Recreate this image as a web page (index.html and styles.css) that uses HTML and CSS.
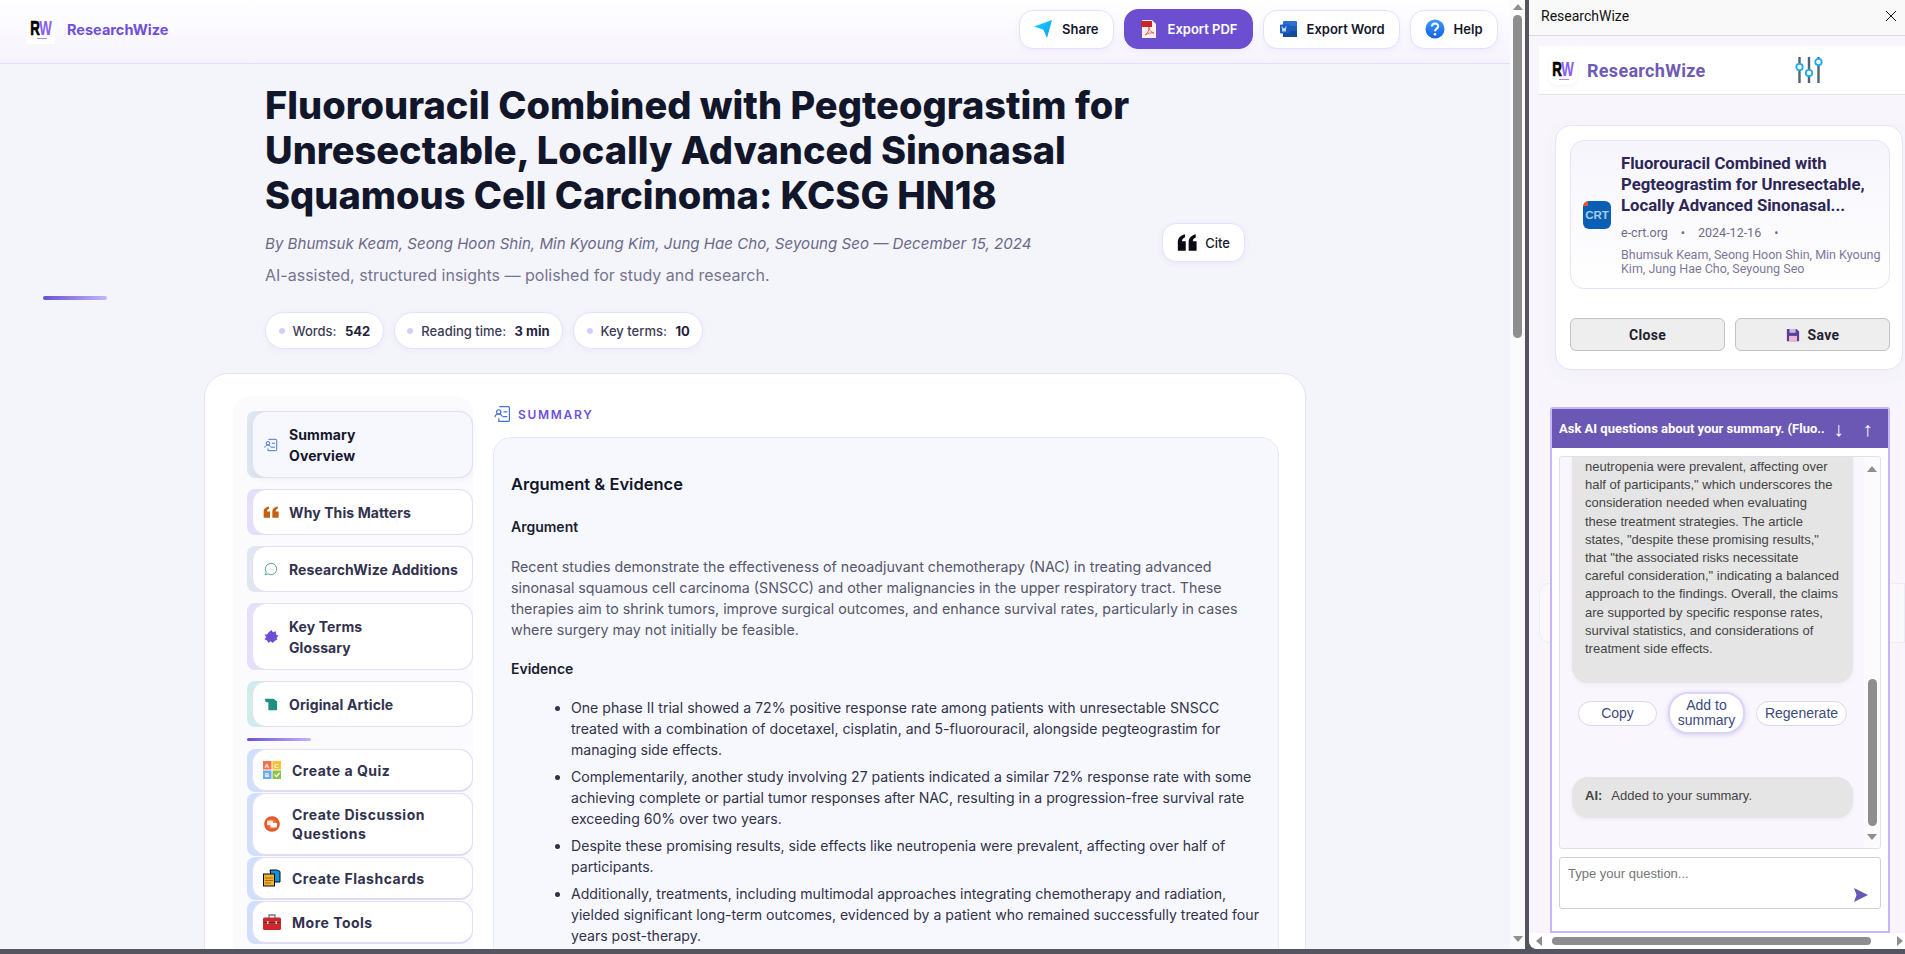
FILE: index.html
```html
<!DOCTYPE html>
<html lang="en">
<head>
    <meta charset="UTF-8">
    <meta name="viewport" content="width=device-width, initial-scale=1.0">
    <title>ResearchWize</title>
    <link rel="stylesheet" href="styles.css">
</head>
<body>
    <div class="window">
        <div class="main-pane">
            <div class="page">
                <header class="topbar">
                    <div class="brand">
                        <div class="logo"><span class="logo-r">R</span><span class="logo-w">W</span></div>
                        <span class="brand-name">ResearchWize</span>
                    </div>
                    <div class="top-actions">
                        <button class="btn">
                            <svg class="btn-icon" viewBox="0 0 20 20"><defs><linearGradient id="plane" x1="0" y1="0" x2="1" y2="1"><stop offset="0" stop-color="#22d3fe"/><stop offset="1" stop-color="#0a9bf5"/></linearGradient></defs><path d="M1 7.5 19 1l-5 18-3.6-8.3z" fill="url(#plane)"/></svg>
                            Share
                        </button>
                        <button class="btn btn-primary">
                            <svg class="btn-icon" viewBox="0 0 20 20"><path d="M3 1h10l4 4v14H3z" fill="#f6f1ee"/><rect x="2" y="2" width="11" height="6" fill="#c8262a"/><path d="M6 16c3-2 4-5 4-8 0 3 2 5 5 6-3-.5-6 0-9 2z" fill="none" stroke="#e8605a" stroke-width="1"/></svg>
                            Export PDF
                        </button>
                        <button class="btn">
                            <svg class="btn-icon" viewBox="0 0 20 20"><rect x="5" y="2" width="14" height="16" rx="1" fill="#2b6fd0"/><rect x="5" y="12" width="14" height="6" fill="#134a9c"/><rect x="5" y="7" width="14" height="5" fill="#1f5ab8"/><rect x="2" y="5.5" width="10" height="9" rx="1" fill="#1d5cc0"/><path d="m4 7.5 1 5 1-3.5 1 3.5 1-5" fill="none" stroke="#fff" stroke-width=".8"/></svg>
                            Export Word
                        </button>
                        <button class="btn">
                            <svg class="btn-icon" viewBox="0 0 20 20"><defs><linearGradient id="helpfill" x1="0" y1="0" x2="0" y2="1"><stop offset="0" stop-color="#3d9bfa"/><stop offset="1" stop-color="#1560e0"/></linearGradient></defs><circle cx="10" cy="10" r="9.5" fill="url(#helpfill)"/><path d="M7 7.6c0-4 6.200-4 6.200-.4 0 2.400-3.200 2.400-3.200 5" fill="none" stroke="#fff" stroke-width="2"/><circle cx="10" cy="15.200" r="1.300" fill="#fff"/></svg>
                            Help
                        </button>
                    </div>
                </header>

                <section class="hero-row">
                    <div class="accent-bar"></div>
                    <div class="hero">
                        <h1>Fluorouracil Combined with Pegteograstim for Unresectable, Locally Advanced Sinonasal Squamous Cell Carcinoma: KCSG HN18</h1>
                        <div class="byline-row">
                            <p class="byline">By Bhumsuk Keam, Seong Hoon Shin, Min Kyoung Kim, Jung Hae Cho, Seyoung Seo — December 15, 2024</p>
                            <button class="btn btn-cite">
                                <svg class="cite-icon" viewBox="0 0 24 20"><path d="M1 20V9.500C1 4.500 4 1.500 9.500 0v4C7 5 6 6.500 6 8.500h4.500V20zM14 20V9.500C14 4.500 17 1.500 22.500 0v4C20 5 19 6.500 19 8.500h4.500V20z" fill="#0a0a12"/></svg>
                                Cite
                            </button>
                        </div>
                        <p class="subtitle">AI-assisted, structured insights — polished for study and research.</p>
                        <div class="chips">
                            <div class="chip"><i class="dot"></i>Words: <b>542</b></div>
                            <div class="chip"><i class="dot"></i>Reading time: <b>3 min</b></div>
                            <div class="chip"><i class="dot"></i>Key terms: <b>10</b></div>
                        </div>
                    </div>
                </section>

                <main class="main-card">
                    <nav class="sidebar">
                        <a class="nav-item two-line active bar-slate"><span class="nav-inner">
                            <svg class="nav-icon small" viewBox="0 0 16 16"><path d="M5 1.500h8.500a1 1 0 0 1 1 1v11a1 1 0 0 1-1 1H4.500V12M9 6h3.500M8 10.500h4.500" fill="none" stroke="#3f6fd8" stroke-width="1.100"/><circle cx="4.500" cy="6" r="2" fill="none" stroke="#3f6fd8" stroke-width="1.100"/><path d="M1 11c0-2 1.500-3 3.500-3s2.500 1 3 2" fill="none" stroke="#3f6fd8" stroke-width="1.100"/></svg>
                            <span>Summary<br>Overview</span>
                        </span></a>
                        <a class="nav-item bar-lilac"><span class="nav-inner">
                            <svg class="nav-icon" viewBox="0 0 24 20"><path d="M1 18V9C1 4.500 3.500 2 9 1v3.500C7 5.500 6 6.500 6 8.500h4.500V18zM14 18V9c0-4.500 2.500-7 8-8v3.500c-2 1-3 2-3 4h4.500V18z" fill="#c2600f"/></svg>
                            <span>Why This Matters</span>
                        </span></a>
                        <a class="nav-item bar-slate"><span class="nav-inner">
                            <svg class="nav-icon small" viewBox="0 0 16 16"><path d="M8 1.500a6.500 6.500 0 1 1-3.400 12L1.500 14.500l1-3A6.500 6.500 0 0 1 8 1.500z" fill="none" stroke="#3aa76d" stroke-width="1"/><path d="M5.500 8h.6M7.700 8h.6M9.900 8h.6" stroke="#9aa" stroke-width="1"/></svg>
                            <span>ResearchWize Additions</span>
                        </span></a>
                        <a class="nav-item two-line bar-lilac"><span class="nav-inner">
                            <svg class="nav-icon" viewBox="0 0 16 16"><path d="M5.500 3.500 8.500 1l1.500 2.500 3-1 .5 3.500 2.500 1-2 2.500 1 1.500-3.500 2L10 15 7.500 13l-2 2-2-3-2.500-1 2-2.500L1 6l3-.5z" fill="#6d4fd6"/></svg>
                            <span>Key Terms<br>Glossary</span>
                        </span></a>
                        <a class="nav-item bar-mint"><span class="nav-inner">
                            <svg class="nav-icon small" viewBox="0 0 16 16"><path d="M1 2h10l4 3v10H5V6H2z" fill="#1f8f82"/></svg>
                            <span>Original Article</span>
                        </span></a>

                        <div class="nav-divider"></div>

                        <a class="nav-item tool bar-blue"><span class="nav-inner">
                            <svg class="tool-icon" viewBox="0 0 18 18"><rect width="8.500" height="8.500" fill="#f2744f"/><rect x="9.500" width="8.500" height="8.500" fill="#fbc02d"/><rect y="9.500" width="8.500" height="8.500" fill="#6aa9f4"/><rect x="9.500" y="9.500" width="8.500" height="8.500" fill="#8bc34a"/><text x="4.200" y="6.500" class="quiz-letter">A</text><text x="13.700" y="6.500" class="quiz-letter">C</text><text x="4.200" y="16" class="quiz-letter">B</text><path d="m11.500 13.500 2 2 3-3.500" fill="none" stroke="#fff" stroke-width="1.200"/></svg>
                            <span>Create a Quiz</span>
                        </span></a>
                        <a class="nav-item tool tool-tall bar-blue"><span class="nav-inner">
                            <svg class="tool-icon" viewBox="0 0 18 18"><defs><radialGradient id="disc"><stop offset="0" stop-color="#f59a6a"/><stop offset="1" stop-color="#dd4a1c"/></radialGradient></defs><circle cx="9" cy="9" r="7.800" fill="url(#disc)"/><rect x="4" y="5.500" width="6" height="4.500" rx="1" fill="#fde3d8"/><rect x="7.500" y="8" width="6.500" height="4.500" rx="1" fill="#fff"/></svg>
                            <span>Create Discussion<br>Questions</span>
                        </span></a>
                        <a class="nav-item tool bar-blue"><span class="nav-inner">
                            <svg class="tool-icon" viewBox="0 0 18 18"><path d="M7 1h7l3 1.500V13h-8z" fill="#1293dc" stroke="#0a0a12" stroke-width="1"/><rect x=".5" y="5" width="11" height="12" fill="#f2b233" stroke="#0a0a12" stroke-width="1"/><path d="M2 9h8M2 11.500h8M2 14h6" stroke="#a06a10" stroke-width="1"/></svg>
                            <span>Create Flashcards</span>
                        </span></a>
                        <a class="nav-item tool bar-blue"><span class="nav-inner">
                            <svg class="tool-icon" viewBox="0 0 18 18"><path d="M6 5V2h6v3" fill="none" stroke="#777" stroke-width="1.300"/><rect y="4.500" width="18" height="12.500" rx="1.500" fill="#c8282e"/><rect y="9" width="18" height="1" fill="#8f1a1f"/><rect x="4" y="8" width="1.500" height="3" fill="#ddd"/><rect x="12.500" y="8" width="1.500" height="3" fill="#ddd"/></svg>
                            <span>More Tools</span>
                        </span></a>
                    </nav>

                    <div class="content">
                        <div class="section-head">
                            <svg class="section-icon" viewBox="0 0 16 16"><path d="M5 1h8.500a1 1 0 0 1 1 1v12a1 1 0 0 1-1 1H4.500v-3M9 6h3.500M8 10.500h4.500" fill="none" stroke="#3f6fd8" stroke-width="1.100"/><circle cx="4.500" cy="6" r="2" fill="none" stroke="#3f6fd8" stroke-width="1.100"/><path d="M1 11c0-2 1.500-3 3.500-3s2.500 1 3 2" fill="none" stroke="#3f6fd8" stroke-width="1.100"/></svg>
                            <span>SUMMARY</span>
                        </div>
                        <article class="summary-box">
                            <h2>Argument &amp; Evidence</h2>
                            <h3>Argument</h3>
                            <p>Recent studies demonstrate the effectiveness of neoadjuvant chemotherapy (NAC) in treating advanced sinonasal squamous cell carcinoma (SNSCC) and other malignancies in the upper respiratory tract. These therapies aim to shrink tumors, improve surgical outcomes, and enhance survival rates, particularly in cases where surgery may not initially be feasible.</p>
                            <h3 class="evidence">Evidence</h3>
                            <ul>
                                <li>One phase II trial showed a 72% positive response rate among patients with unresectable SNSCC treated with a combination of docetaxel, cisplatin, and 5-fluorouracil, alongside pegteograstim for managing side effects.</li>
                                <li>Complementarily, another study involving 27 patients indicated a similar 72% response rate with some achieving complete or partial tumor responses after NAC, resulting in a progression-free survival rate exceeding 60% over two years.</li>
                                <li>Despite these promising results, side effects like neutropenia were prevalent, affecting over half of participants.</li>
                                <li>Additionally, treatments, including multimodal approaches integrating chemotherapy and radiation, yielded significant long-term outcomes, evidenced by a patient who remained successfully treated four years post-therapy.</li>
                            </ul>
                        </article>
                    </div>
                </main>
            </div>
            <div class="page-scrollbar">
                <i class="arrow-up"></i>
                <div class="page-thumb"></div>
                <i class="arrow-down page-arrow-down"></i>
            </div>
        </div>

        <div class="side-pane">
            <div class="side-title">
                <span>ResearchWize</span>
                <svg class="close-icon" viewBox="0 0 12 12"><path d="M1 1l10 10M11 1 1 11" stroke="#111" stroke-width="1"/></svg>
            </div>
            <div class="side-body">
                <div class="side-head">
                    <div class="logo logo-big"><span class="logo-r">R</span><span class="logo-w">W</span></div>
                    <span class="side-brand">ResearchWize</span>
                    <svg class="sliders" viewBox="0 0 28 28"><path d="M4.500 1v26M14 1v26M23.500 1v26" stroke="#4f6473" stroke-width="2.400"/><circle cx="4.500" cy="11" r="3.200" fill="#fff" stroke="#1fa8f5" stroke-width="1.800"/><circle cx="14" cy="17" r="3.200" fill="#fff" stroke="#1fa8f5" stroke-width="1.800"/><circle cx="23.500" cy="6" r="3.200" fill="#fff" stroke="#1fa8f5" stroke-width="1.800"/></svg>
                </div>

                <div class="source-card">
                    <div class="source-info">
                        <div class="favicon"><i></i>CRT</div>
                        <div class="source-text">
                            <h4>Fluorouracil Combined with Pegteograstim for Unresectable, Locally Advanced Sinonasal...</h4>
                            <div class="source-meta"><span>e-crt.org</span><span>•</span><span>2024-12-16</span><span>•</span></div>
                            <p>Bhumsuk Keam, Seong Hoon Shin, Min Kyoung Kim, Jung Hae Cho, Seyoung Seo</p>
                        </div>
                    </div>
                    <div class="source-actions">
                        <button class="grey-btn">Close</button>
                        <button class="grey-btn">
                            <svg class="save-icon" viewBox="0 0 16 16"><path d="M1 1h11l3 3v11H1z" fill="#5b3f94"/><rect x="4" y="1" width="7" height="4.500" fill="#c9b8e8"/><rect x="3.500" y="9" width="9" height="6" fill="#f0b8d0"/></svg>
                            Save
                        </button>
                    </div>
                </div>

                <div class="ghost-card"></div>
            </div>

            <div class="chat">
                <div class="chat-head">
                    <span class="chat-title">Ask AI questions about your summary. (Fluo...</span>
                    <span class="chat-arrow">↓</span>
                    <span class="chat-arrow">↑</span>
                </div>
                <div class="chat-body">
                    <div class="messages">
                        <div class="msg-scroll">
                            <div class="bubble bubble-long">neutropenia were prevalent, affecting over half of participants," which underscores the consideration needed when evaluating these treatment strategies. The article states, "despite these promising results," that "the associated risks necessitate careful consideration," indicating a balanced approach to the findings. Overall, the claims are supported by specific response rates, survival statistics, and considerations of treatment side effects.</div>
                            <div class="msg-actions">
                                <button class="pill pill-copy">Copy</button>
                                <button class="pill pill-add">Add to summary</button>
                                <button class="pill pill-regen">Regenerate</button>
                            </div>
                            <div class="bubble bubble-short"><b>AI:</b>Added to your summary.</div>
                        </div>
                        <div class="msg-scrollbar">
                            <i class="arrow-up"></i>
                            <div class="msg-thumb"></div>
                            <i class="arrow-down"></i>
                        </div>
                    </div>
                    <div class="chat-input">
                        <span class="placeholder">Type your question...</span>
                        <svg class="send-icon" viewBox="0 0 14 14"><path d="M0 0 14 7 0 14l2.500-7z" fill="#6b58b5"/></svg>
                    </div>
                </div>
            </div>

            <div class="side-hscroll">
                <i class="arrow-left"></i>
                <div class="h-thumb"></div>
                <i class="arrow-right"></i>
            </div>
        </div>
    </div>
</body>
</html>
```

FILE: styles.css
```css
* {
    margin: 0;
    padding: 0;
    box-sizing: border-box;
}

body {
    width: 1905px;
    height: 954px;
    overflow: hidden;
    background-color: #55555f;
    font-family: 'Inter', 'Liberation Sans', sans-serif;
    color: #12162a;
}

.window {
    display: flex;
    height: 949px;
}

/* left pane */
.main-pane {
    display: flex;
    width: 1525px;
    background-color: #f4f4fb;
}

.page {
    width: 1510px;
    overflow: hidden;
}

.page-scrollbar {
    position: relative;
    width: 15px;
    background-color: #fbfbfd;
    display: flex;
    flex-direction: column;
    align-items: center;
    padding-top: 4px;
}

.page-thumb {
    width: 9px;
    height: 323px;
    margin-top: 5px;
    background-color: #8e8e8e;
    border-radius: 5px;
}

.page-arrow-down {
    margin-top: auto;
    margin-bottom: 7px;
}

.arrow-up,
.arrow-down {
    width: 0;
    height: 0;
    border-left: 5px solid transparent;
    border-right: 5px solid transparent;
    flex-shrink: 0;
}

.arrow-up {
    border-bottom: 6px solid #8e8e8e;
}

.arrow-down {
    border-top: 6px solid #8e8e8e;
}

.arrow-left,
.arrow-right {
    width: 0;
    height: 0;
    border-top: 5px solid transparent;
    border-bottom: 5px solid transparent;
    flex-shrink: 0;
}

.arrow-left {
    border-right: 6px solid #8e8e8e;
}

.arrow-right {
    border-left: 6px solid #8e8e8e;
}

.topbar {
    height: 64px;
    display: flex;
    justify-content: space-between;
    align-items: center;
    padding: 0 12px 5px 27px;
    background: linear-gradient(180deg, #ffffff, #f6f3fd);
    border-bottom: 1px solid #e2dcf8;
}

.brand {
    display: flex;
    align-items: center;
    gap: 12px;
}

.logo {
    position: relative;
    width: 28px;
    height: 29px;
    background-color: white;
    display: flex;
    justify-content: center;
    align-items: center;
    font-family: 'Liberation Sans', sans-serif;
    font-weight: 700;
    font-size: 14px;
    line-height: 1;
    letter-spacing: -1px;
    overflow: hidden;
}

.logo::after {
    content: '';
    position: absolute;
    left: 10px;
    bottom: 5px;
    width: 10px;
    height: 1px;
    background-color: #a78bfa;
}

.logo span {
    display: inline-block;
    transform: scale(0.95, 1.4);
    margin-bottom: 2px;
}

.logo-r {
    color: #000;
    -webkit-text-stroke: 0.5px #000;
}

.logo-w {
    color: #8a5cf6;
}

.brand-name {
    font-size: 14.5px;
    font-weight: 700;
    color: #6f4fd8;
}

.top-actions {
    display: flex;
    gap: 10px;
    align-items: center;
}

.btn {
    display: flex;
    align-items: center;
    height: 39px;
    padding: 0 14.5px;
    gap: 10px;
    background-color: white;
    border: 1px solid #e6e0fa;
    border-radius: 14px;
    box-shadow: 0 2px 6px rgba(90, 70, 200, 0.06);
    font-family: inherit;
    font-size: 13px;
    font-weight: 600;
    color: #14172b;
}

.btn-primary {
    height: 40px;
    background-color: #6c4fd0;
    border-color: #6c4fd0;
    color: white;
}

.btn-icon {
    width: 20px;
    height: 20px;
    margin-left: -1px;
    margin-right: -1px;
}

.hero-row {
    display: flex;
    padding-left: 43px;
}

.accent-bar {
    width: 64px;
    height: 4px;
    margin-top: 232px;
    margin-right: 158px;
    border-radius: 2px;
    background: linear-gradient(90deg, #6c4fd0, #c4b5fd);
}

.hero {
    width: 980px;
    padding-top: 19px;
}

h1 {
    max-width: 900px;
    font-size: 38px;
    line-height: 45px;
    font-weight: 800;
    color: #12162a;
}

.byline-row {
    display: flex;
    justify-content: space-between;
    align-items: center;
    margin-top: 5px;
    height: 39px;
}

.byline {
    padding-top: 1px;
    font-size: 15.1px;
    font-style: italic;
    color: #6a6a88;
}

.btn-cite {
    width: 83px;
    gap: 8px;
    justify-content: center;
    padding: 0;
    font-weight: 500;
}

.cite-icon {
    width: 20px;
    height: 19px;
}

.subtitle {
    margin-top: 3px;
    font-size: 16px;
    line-height: 20px;
    color: #74748e;
}

.chips {
    display: flex;
    gap: 10px;
    margin-top: 27px;
}

.chip {
    display: flex;
    align-items: center;
    height: 37px;
    padding: 0 12.5px;
    background-color: white;
    border: 1px solid #e6e0fa;
    border-radius: 19px;
    box-shadow: 0 2px 6px rgba(90, 70, 200, 0.05);
    font-size: 13px;
    font-weight: 500;
    color: #3b3b55;
    white-space: pre;
}

.chip b {
    margin-left: 5px;
    font-weight: 700;
    color: #23233c;
}

.dot {
    width: 6px;
    height: 6px;
    margin-right: 8px;
    border-radius: 50%;
    background-color: #d8ccfa;
}

.main-card {
    display: flex;
    gap: 20px;
    width: 1102px;
    height: 700px;
    margin-top: 24px;
    margin-left: 204px;
    padding: 22px 26px 0 28px;
    background-color: white;
    border: 1px solid #e6e0fa;
    border-radius: 24px;
}

.sidebar {
    width: 240px;
    flex-shrink: 0;
    padding: 15px 0 0 14px;
    background-color: #fbfbfe;
    border-radius: 18px;
}

.nav-item {
    display: block;
    margin-bottom: 11px;
    padding-left: 6px;
    border-radius: 8px 14px 14px 8px;
}

.bar-slate {
    background-color: #dfe7f0;
}

.bar-lilac {
    background-color: #e7defc;
}

.bar-mint {
    background-color: #cdeee9;
}

.bar-blue {
    background-color: #d0e0fc;
}

.nav-inner {
    display: flex;
    align-items: center;
    gap: 10px;
    min-height: 46px;
    padding: 3px 0 3px 10px;
    margin-left: -1px;
    background-color: white;
    border: 1px solid #e4defa;
    border-radius: 14px;
    font-size: 14px;
    line-height: 21px;
    font-weight: 700;
    letter-spacing: 0.1px;
    color: #32324e;
}

.two-line .nav-inner {
    min-height: 67px;
}

.nav-icon {
    width: 16px;
    height: 15px;
    flex-shrink: 0;
}

.nav-icon.small {
    width: 14px;
    height: 14px;
    margin-left: 1px;
    margin-right: 1px;
}

.active .nav-inner {
    background-color: #f7f8fd;
    color: #14172b;
    box-shadow: 0 2px 6px rgba(60, 60, 120, 0.06);
}

.nav-divider {
    width: 64px;
    height: 3px;
    margin: 8px 0 8px;
    border-radius: 2px;
    background: linear-gradient(90deg, #6c4fd0, #c4b5fd);
}

.tool {
    margin-bottom: 1px;
}

.tool .nav-inner {
    min-height: 43px;
    gap: 11px;
    border-bottom: 2px solid #e0dcf4;
    font-size: 14px;
    line-height: 19px;
    letter-spacing: 0.5px;
}

.tool-tall .nav-inner {
    min-height: 63px;
}

.tool-icon {
    width: 18px;
    height: 18px;
    flex-shrink: 0;
}

.quiz-letter {
    font-family: 'Liberation Sans', sans-serif;
    font-size: 6px;
    fill: white;
    text-anchor: middle;
}

.content {
    flex: 1;
    padding-top: 8px;
}

.section-head {
    display: flex;
    align-items: center;
    gap: 7px;
    height: 20px;
    margin-bottom: 13px;
    padding-left: 1px;
    font-size: 12px;
    font-weight: 600;
    letter-spacing: 1.7px;
    color: #6f4fd8;
}

.section-icon {
    width: 17px;
    height: 18px;
}

.summary-box {
    padding: 34px 17px 0;
    height: 600px;
    background-color: #f7f8fd;
    border: 1px solid #e6e8f6;
    border-radius: 18px;
}

h2 {
    font-size: 16.5px;
    line-height: 24px;
    font-weight: 600;
    color: #12162a;
}

h3 {
    margin-top: 20px;
    font-size: 14px;
    line-height: 22px;
    font-weight: 600;
    color: #1a1d30;
}

h3.evidence {
    margin-top: 18px;
}

.summary-box p {
    margin-top: 18px;
    font-size: 14.25px;
    line-height: 21px;
    color: #54566a;
}

.summary-box ul {
    margin-top: 17px;
    padding-left: 60px;
}

.summary-box li {
    margin-bottom: 6px;
    font-size: 14.1px;
    line-height: 21px;
    color: #30324a;
}

/* right pane */
.side-pane {
    position: relative;
    width: 376px;
    margin-left: 4px;
    background-color: #faf9fc;
    overflow: hidden;
    border-bottom-left-radius: 8px;
}

.side-title {
    display: flex;
    justify-content: space-between;
    align-items: center;
    height: 36px;
    padding: 0 8px 3px 12px;
    background-color: #f9f9fa;
    border-bottom: 1px solid #dcdce0;
    font-family: 'Roboto', 'Liberation Sans', sans-serif;
    font-size: 14px;
    color: #111;
}

.close-icon {
    width: 12px;
    height: 12px;
}

.side-body {
    height: 897px;
    padding-top: 10px;
    padding-left: 10px;
    background-color: #f8f6fc;
}

.side-head {
    display: flex;
    align-items: center;
    height: 49px;
    padding-left: 10px;
    background-color: white;
    border-bottom: 1px solid #e2e2e8;
}

.logo-big {
    border-radius: 8px;
    box-shadow: 0 1px 4px rgba(0, 0, 0, 0.06);
    font-size: 14px;
}

.side-brand {
    margin-left: 10px;
    font-family: 'Roboto', 'Liberation Sans', sans-serif;
    font-size: 18px;
    font-weight: 700;
    letter-spacing: 0.3px;
    color: #6f5bb5;
}

.sliders {
    width: 28px;
    height: 28px;
    margin-left: 89px;
}

.source-card {
    width: 348px;
    height: 245px;
    margin-top: 30px;
    margin-left: 16px;
    padding: 14px 0 0 14px;
    background-color: white;
    border: 1px solid #e8e4f6;
    border-radius: 16px;
    box-shadow: 0 4px 16px rgba(90, 70, 200, 0.05);
}

.source-info {
    display: flex;
    align-items: center;
    gap: 10px;
    width: 320px;
    height: 149px;
    padding-left: 12px;
    background: linear-gradient(180deg, #f6f5fc, #ffffff);
    border: 1px solid #e6e4f8;
    border-radius: 14px;
}

.favicon {
    position: relative;
    width: 28px;
    height: 28px;
    flex-shrink: 0;
    overflow: hidden;
    border-radius: 6px;
    background-color: #0a5fb4;
    font-family: 'Liberation Sans', sans-serif;
    font-size: 11.5px;
    font-weight: 700;
    line-height: 28px;
    text-align: center;
    color: #a9cdea;
}

.favicon i {
    position: absolute;
    top: 0;
    left: 0;
    width: 5px;
    height: 5px;
    background-color: #e8532a;
}

.source-text {
    width: 262px;
    font-family: 'Roboto', 'Liberation Sans', sans-serif;
}

.source-text h4 {
    font-size: 16.7px;
    line-height: 21px;
    font-weight: 700;
    color: #2d2657;
}

.source-meta {
    display: flex;
    gap: 13px;
    margin-top: 9px;
    font-size: 12.5px;
    line-height: 16px;
    color: #6f6a8c;
}

.source-text p {
    margin-top: 7px;
    font-size: 12.5px;
    line-height: 14px;
    color: #7d7799;
}

.source-actions {
    display: flex;
    gap: 10px;
    width: 320px;
    margin-top: 29px;
}

.grey-btn {
    display: flex;
    flex: 1;
    justify-content: center;
    align-items: center;
    gap: 8px;
    height: 33px;
    background-color: #eeeeee;
    border: 1px solid #c2c2c8;
    border-radius: 6px;
    font-family: 'Roboto', 'Liberation Sans', sans-serif;
    font-size: 14px;
    font-weight: 700;
    letter-spacing: 0.3px;
    color: #23232e;
}

.save-icon {
    width: 14px;
    height: 14px;
}

.ghost-card {
    height: 60px;
    margin-top: 213px;
    background-color: #f9f8fc;
    border: 1px solid #eeecf4;
    border-radius: 10px 0 0 10px;
}

.chat {
    position: absolute;
    top: 407px;
    left: 21px;
    width: 340px;
    height: 526px;
    background-color: white;
    border: 2px solid #c4b5fd;
    border-radius: 3px 3px 0 0;
}

.chat-head {
    display: flex;
    align-items: center;
    height: 39px;
    padding-left: 7px;
    background-color: #6b58b5;
    font-family: 'Roboto', 'Liberation Sans', sans-serif;
    font-size: 13px;
    font-weight: 700;
    color: white;
}

.chat-title {
    width: 265px;
    white-space: nowrap;
    overflow: hidden;
}

.chat-arrow {
    width: 29px;
    text-align: center;
    font-size: 20px;
    font-weight: 400;
}

.chat-body {
    padding: 8px 7px;
}

.messages {
    display: flex;
    height: 393px;
    background-color: #f9f6fd;
    border: 1px solid #e2deef;
    border-radius: 3px;
    overflow: hidden;
}

.msg-scroll {
    flex: 1;
    padding-left: 12px;
    font-family: 'Liberation Sans', sans-serif;
}

.bubble {
    width: 281px;
    padding-left: 13px;
    padding-right: 13px;
    background-color: #e5e5e5;
    border-radius: 16px;
    box-shadow: 0 2px 4px rgba(80, 60, 140, 0.06);
    font-size: 13px;
    line-height: 18.2px;
    color: #444;
}

.bubble-long {
    margin-top: -16px;
    padding-top: 17px;
    padding-bottom: 25px;
}

.bubble-short {
    height: 41px;
    margin-top: 43px;
    padding-top: 10px;
}

.bubble-short b {
    margin-right: 9px;
    font-size: 13px;
}

.msg-actions {
    display: flex;
    align-items: center;
    gap: 11px;
    margin-top: 9px;
    margin-left: 6px;
}

.pill {
    height: 25px;
    background-color: white;
    border: 1px solid #d9d7ea;
    border-radius: 14px;
    font-family: 'Liberation Sans', sans-serif;
    font-size: 14px;
    line-height: 15px;
    color: #3d4a7a;
}

.pill-copy {
    width: 79px;
}

.pill-add {
    width: 77px;
    height: 42px;
    border: 2px solid #dcd4f6;
    border-radius: 20px;
    box-shadow: 0 1px 5px rgba(110, 90, 200, 0.25);
}

.pill-regen {
    width: 91px;
}

.msg-scrollbar {
    display: flex;
    flex-direction: column;
    align-items: center;
    width: 16px;
    padding-top: 9px;
    background-color: #fbfafd;
}

.msg-thumb {
    width: 9px;
    height: 147px;
    margin-top: auto;
    border-radius: 5px;
    background-color: #8e8e8e;
}

.msg-scrollbar .arrow-down {
    margin-top: 8px;
    margin-bottom: 8px;
}

.chat-input {
    position: relative;
    height: 52px;
    margin-top: 8px;
    padding: 8px 8px;
    background-color: white;
    border: 1px solid #cfcfd8;
    border-radius: 3px;
    font-family: 'Liberation Sans', sans-serif;
    font-size: 13px;
    line-height: 16px;
    color: #757575;
}

.send-icon {
    position: absolute;
    right: 12px;
    bottom: 6px;
    width: 14px;
    height: 14px;
}

.side-hscroll {
    position: absolute;
    left: 0;
    right: 0;
    bottom: 0;
    height: 16px;
    display: flex;
    align-items: center;
    padding: 0 2px 0 7px;
    background-color: white;
    border-bottom-left-radius: 8px;
}

.h-thumb {
    width: 319px;
    height: 8px;
    margin-left: 10px;
    margin-right: auto;
    border-radius: 4px;
    background-color: #8e8e8e;
}
```
